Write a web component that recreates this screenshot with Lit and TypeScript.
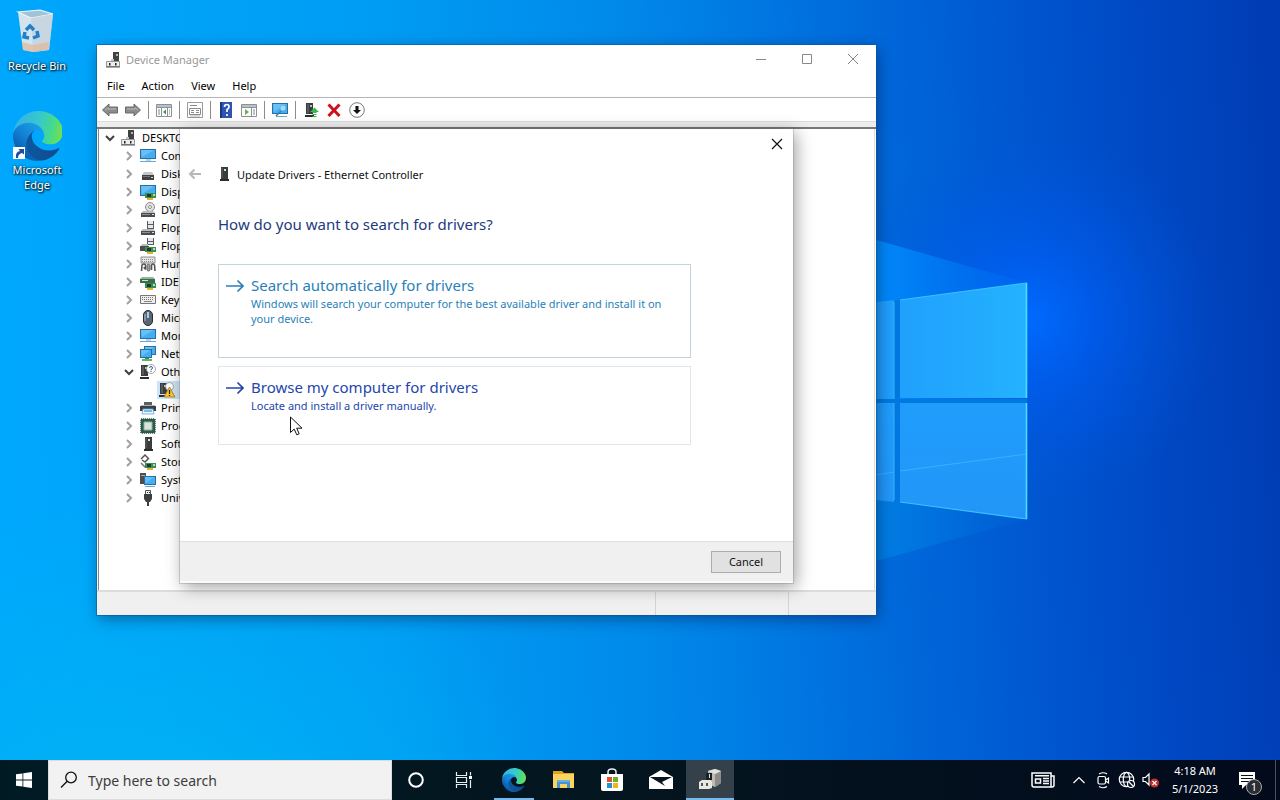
import { LitElement, html, svg, css, TemplateResult, SVGTemplateResult } from "lit";
import { customElement, property } from "lit/decorators.js";
import { classMap } from "lit/directives/class-map.js";

const tower = (x: number) => svg`
  <path d="M${x} 1h7v11h-7z" fill="#3a3d3e"/><path d="M${x + 1} 2h2v9h-2z" fill="#565a5b"/>
  <path d="M${x + 4} 3h2v2h-2z" fill="#9fd6a8"/><path d="M${x - 1} 13h9v2h-9z" fill="#2b2d2e"/>`;

const drive = svg`
  <path d="M3 9h10l2 2H1z" fill="#b9bcbe"/><path d="M1 11h14v4H1z" fill="#4a4d4f"/>
  <path d="M2 12h8v1H2z" fill="#8b9092"/><path d="M12 12h2v1h-2z" fill="#c7f0cb"/>`;

const card = svg`
  <path d="M5 9h11v5H5z" fill="#3b8f4e"/><path d="M7 10h4v3H7z" fill="#24343a"/>
  <path d="M7 14h6v2H7z" fill="#e0b52c"/><path d="M13 10h2v2h-2z" fill="#b7dcb0"/>`;

const screen = (x: number, y: number, w: number, h: number) => svg`
  <rect x=${x + 0.5} y=${y + 0.5} width=${w} height=${h} fill="#45aef0" stroke="#2a6fa3"/>
  <path d="M${x + 1} ${y + 1}h${w - 2}l-${w - 3} ${h - 2}z" fill="#7fcbfa" opacity=".6"/>`;

const chassis = svg`
  <path d="M8 0h6v9H8z" fill="#424242"/><path d="M11 2h2v2h-2z" fill="#b5b5b5"/>
  <path d="M6 7h3v3H6z" fill="#c4c4c4"/>
  <path d="M1.500 9.500h13v5h-13z" fill="#ededed" stroke="#8a8a8a" stroke-width=".9"/>
  <path d="M4 11h1.500v2.500H4zM10 11h1.500v2.500H10z" fill="#222"/><path d="M1 15h14" stroke="#555"/>`;

const edge = (id: string) => svg`
  <defs>
    <linearGradient id="${id}a" x1="63" y1="178" x2="241" y2="178" gradientUnits="userSpaceOnUse">
      <stop offset="0" stop-color="#0c59a4"/><stop offset="1" stop-color="#114a8b"/></linearGradient>
    <linearGradient id="${id}b" x1="157" y1="103" x2="46" y2="221" gradientUnits="userSpaceOnUse">
      <stop offset="0" stop-color="#1b9de2"/><stop offset=".5" stop-color="#1383d8"/><stop offset="1" stop-color="#0b5cab"/></linearGradient>
    <linearGradient id="${id}c" x1="20" y1="70" x2="255" y2="125" gradientUnits="userSpaceOnUse">
      <stop offset="0" stop-color="#35b4e4"/><stop offset=".45" stop-color="#36c8cf"/><stop offset=".75" stop-color="#43d98f"/><stop offset="1" stop-color="#72e04e"/></linearGradient>
  </defs>
  <g transform="translate(-4.63 -4.92)">
    <path fill="url(#${id}a)" d="M235.68 195.46a93.73 93.73 0 01-10.54 4.71 101.87 101.87 0 01-35.9 6.46c-47.32 0-88.54-32.55-88.54-74.32A31.48 31.48 0 01117.13 105c-42.8 1.8-53.8 46.4-53.8 72.53 0 73.88 68.09 81.37 82.76 81.37 7.91 0 19.84-2.3 27-4.56l1.31-.44a128.34 128.34 0 0066.6-52.8 4 4 0 00-5.32-5.64z"/>
    <path fill="url(#${id}b)" d="M110.34 246.34A79.2 79.2 0 0187.6 225a80.72 80.72 0 0129.53-120c3.12-1.47 8.45-4.13 15.54-4a32.35 32.35 0 0125.69 13 31.88 31.88 0 016.36 18.66c0-.21 24.46-79.6-80-79.6-43.9 0-80 41.66-80 78.21a130.15 130.15 0 0012.11 56 128 128 0 00156.38 67.11 75.55 75.55 0 01-62.78-8z"/>
    <path fill="url(#${id}c)" d="M156.94 153.78c-.81 1.05-3.3 2.5-3.3 5.66 0 2.61 1.7 5.12 4.72 7.23 14.38 10 41.49 8.68 41.56 8.68a59.56 59.56 0 0030.27-8.35 61.38 61.38 0 0030.43-52.88c.26-22.41-8-37.31-11.34-43.91C228.09 28.76 182.35 5 132.61 5a128 128 0 00-128 126.2c.48-36.54 36.8-66.05 80-66.05 3.5 0 23.46.34 42 10.07 16.34 8.58 24.9 18.94 30.85 29.21 6.18 10.67 7.28 24.15 7.28 29.52s-2.74 13.33-7.8 19.83z"/>
  </g>`;

const glyphs: Record<string, SVGTemplateResult> = {
  chassis,
  monitor: svg`${screen(0, 1, 15, 9)}<path d="M0 13h16v1H0z" fill="#6aa9d3"/><path d="M6 11h5v2H6z" fill="#b9d4e6"/>`,
  disk: svg`<path d="M4 6h8l2 3H2z" fill="#c4c6c8"/><path d="M2 9h12v5H2z" fill="#3f4244"/><path d="M3 10h7v1H3z" fill="#777"/><path d="M11 11h2v1h-2z" fill="#c7f0cb"/>`,
  display: svg`${screen(0, 1, 15, 10)}${card}`,
  dvd: svg`<circle cx="10" cy="5" r="4.5" fill="#e3e3e3" stroke="#8a8a8a"/><circle cx="10" cy="5" r="1.5" fill="#fff" stroke="#777" stroke-width=".8"/>${drive}`,
  floppy: svg`<path d="M7 1h7v8H7z" fill="#575b5e"/><path d="M8 1h5v3H8zM8 5h5v3H8z" fill="#e8e8e8"/>${drive}`,
  floppyCtl: svg`<path d="M7 0h7v7H7z" fill="#575b5e"/><path d="M8 0h5v3H8zM8 4h5v2H8z" fill="#e8e8e8"/><path d="M0 8h9v5H0z" fill="#4a4d4f"/><path d="M2 6h6v2H1z" fill="#bbb"/>${card}`,
  hid: svg`<path d="M1 1h14v6H1z" fill="#e6e6e6" stroke="#777" stroke-width=".8"/><path d="M2 3.500h12M2 5.500h12" stroke="#888" stroke-dasharray="1 1"/>
    <path d="M1.500 15l.5-6q1-1 2-1t1.500 1v4q-1 0-1.500-2" fill="none" stroke="#555" stroke-width="1.600"/><rect x="7" y="8" width="3" height="7" rx="1.500" fill="#9aa0a4" stroke="#555" stroke-width=".8"/><path d="M11.500 14V9q.5-1 1.500-1t1.500 1l.5 6" fill="none" stroke="#555" stroke-width="1.600"/>`,
  ide: svg`<path d="M2 3h11l2 2H0z" fill="#8fb89a"/><path d="M0 5h15v4H0z" fill="#3c6d4c"/><path d="M2 6h6v1H2z" fill="#d5e5d8"/>${card}`,
  keyboard: svg`<path d="M.5 3.500h15v8H.5z" fill="#eee" stroke="#777"/><path d="M2 5.500h12M2 7.500h12" stroke="#777" stroke-dasharray="1 1"/><path d="M4 9.500h8" stroke="#888"/>`,
  mouse: svg`<rect x="3.500" y=".5" width="9" height="15" rx="4.500" fill="#5a6672" stroke="#262c33"/><path d="M7 2h2v6H7z" fill="#9fd0f2"/><path d="M5 4v7" stroke="#bcc5cd"/>`,
  network: svg`${screen(4, 0, 11, 8)}${screen(0, 3, 11, 8)}<path d="M2 13h10v2H2z" fill="#58b96a"/><path d="M5 12h4v1H5z" fill="#3c8f4e"/>`,
  other: svg`${tower(1)}<circle cx="11" cy="5" r="4.500" fill="#fff" stroke="#8a9299" stroke-width=".8"/><path d="M9.500 4q0-1.500 1.500-1.500T12.500 4q0 1-1.500 1.500v.8M11 7v1" fill="none" stroke="#3d5b8c"/>`,
  warning: svg`${tower(1)}<circle cx="10.500" cy="4.500" r="4" fill="#fff" stroke="#8a9299" stroke-width=".8"/><path d="M10.500 5L16 15H5z" fill="#ffc62e" stroke="#a9761a" stroke-width=".8"/><path d="M10.500 8v4M10.500 13v1" stroke="#222" stroke-width="1.200"/>`,
  printer: svg`<path d="M4 2h8v4H4z" fill="#5a6068"/><path d="M0 6h16v5H0z" fill="#3b4147"/><path d="M1 5h14v1H1z" fill="#adb3b8"/><path d="M3 9h10l1 5H2z" fill="#eaf4fb" stroke="#6aa4cf" stroke-width=".8"/><path d="M4 11h8" stroke="#45aef0" stroke-width="1.500"/>`,
  cpu: svg`<path d="M1 1h14v14H1z" fill="#2f5a48" stroke="#2f5a48" stroke-width="1.500" stroke-dasharray="1.200 .8"/><path d="M4 4h8v8H4z" fill="#d8e4dc" stroke="#8fb3a0"/>`,
  tower: svg`<path d="M5 1h7v12H5z" fill="#3a3d3e"/><path d="M5 2h2v10H5z" fill="#4c4f51"/><path d="M8 3h2v2H8z" fill="#cfe8d2"/><path d="M4 13h9v2H4z" fill="#2b2d2e"/>`,
  storage: svg`<path d="M1 5l4-4 3 3M9 4L5 8 2 6" fill="none" stroke="#555" stroke-width="1.500"/><path d="M1 9l4 4h3" fill="none" stroke="#777" stroke-width="1.500"/>${card}`,
  system: svg`<path d="M0 1h6v11H0z" fill="#4a4e51"/><path d="M1 3h4v1H1z" fill="#aaa"/>${screen(4, 4, 11, 8)}<path d="M5 14h10v1H5z" fill="#6aa9d3"/>`,
  usb: svg`<path d="M5.500 .5h5v4h-5z" fill="#eee" stroke="#555"/><path d="M4 4h8v5l-2 3H6L4 9z" fill="#3d4042"/><path d="M8 12v4" stroke="#3d4042" stroke-width="2"/><path d="M7 2h1v1H7zM9 2h1v1H9z" fill="#333"/>`,
  back: svg`<path d="M.5 8L7 2v3h8.500v6H7v3z" fill="#8b8b8b" stroke="#6a6a6a"/><path d="M3 8l3-2v1h8" fill="none" stroke="#bbb"/>`,
  forward: svg`<path d="M15.500 8L9 2v3H.5v6H9v3z" fill="#8b8b8b" stroke="#6a6a6a"/><path d="M2 7h8V6l3 2" fill="none" stroke="#bbb"/>`,
  panel: svg`<path d="M.5 2.500h15v12H.5z" fill="#fff" stroke="#8a9298"/><path d="M1 3h14v2H1z" fill="#b9c2c9"/><path d="M1 5.500h14M5.500 6v8M11.500 6v8" stroke="#8a9298"/><path d="M10 7.500v5L7 10z" fill="#3f9b3a"/><path d="M2 8h2M2 10h2M2 12h2M13 8h1M13 10h1M13 12h1" stroke="#7d8890"/>`,
  panelRun: svg`<path d="M.5 2.500h15v12H.5z" fill="#fff" stroke="#8a9298"/><path d="M1 3h14v2H1z" fill="#b9c2c9"/><path d="M1 5.500h14M10.500 6v8" stroke="#8a9298"/><path d="M4 7v6l4-3z" fill="#6ab04a"/><path d="M12 8h2M12 10h2M12 12h2" stroke="#7d8890"/>`,
  properties: svg`<path d="M.5 .5h15v15H.5z" fill="#fff" stroke="#9a9a9a"/><path d="M3 3.500h7M2.500 6.500h11v6h-11zM4 8.500h3M9 8.500h3M4 10.500h3M9 10.500h3" fill="none" stroke="#8a8a8a"/><path d="M3 14h10" stroke="#b5b5b5"/>`,
  help: svg`<path d="M2 0h12v16H2z" fill="#2f55b4"/><path d="M2 0h2v16H2z" fill="#1c3681"/><path d="M6.500 5q0-2.500 2.300-2.500T11 5q0 1.500-2 2.500v2.500M9 12v2" fill="none" stroke="#fff" stroke-width="1.700"/>`,
  scan: svg`${screen(0, 1, 15, 10)}<circle cx="11" cy="6" r="3" fill="#9bdcff" stroke="#5fa8d8" stroke-width=".8"/><path d="M9 9l-5 5" stroke="#3d7ba7" stroke-width="1.500"/><path d="M4 14h11v1H4z" fill="#6aa9d3"/>`,
  update: svg`${tower(3)}<path d="M11.500 5.500L16 10h-2.500v1h-4v-1H7z" fill="#3fb54d"/><path d="M9.500 12h4v1h-4zM9.500 14h4v1h-4z" fill="#3fb54d"/>`,
  remove: svg`<path d="M2.500 2.500l11 11.500M13.500 2.500L2.500 14" stroke="#d0101c" stroke-width="3"/>`,
  down: svg`<circle cx="8" cy="8" r="7.300" fill="#fff" stroke="#777"/><path d="M6.500 4h3v4H12l-4 4-4-4h2.500z" fill="#111"/>`,
};

@customElement("sys-icon")
export class SysIcon extends LitElement {
  @property() name = "";
  static styles = css`
    :host { display: inline-flex; flex: none; }
    svg { width: 16px; height: 16px; display: block; overflow: visible; }
  `;
  render() {
    return html`<svg viewBox="0 0 16 16" aria-hidden="true">${glyphs[this.name]}</svg>`;
  }
}

interface Device { icon: string; label: string; open?: boolean; child?: string; }

const devices: Device[] = [
  { icon: "monitor", label: "Computer" },
  { icon: "disk", label: "Disks" },
  { icon: "display", label: "Display" },
  { icon: "dvd", label: "DVD" },
  { icon: "floppy", label: "Floppy" },
  { icon: "floppyCtl", label: "Floppy" },
  { icon: "hid", label: "Human" },
  { icon: "ide", label: "IDE" },
  { icon: "keyboard", label: "Keyboard" },
  { icon: "mouse", label: "Mice" },
  { icon: "monitor", label: "Monitor" },
  { icon: "network", label: "Network" },
  { icon: "other", label: "Other", open: true, child: "Ethernet Controller" },
  { icon: "printer", label: "Printer" },
  { icon: "cpu", label: "Processor" },
  { icon: "tower", label: "Software" },
  { icon: "storage", label: "Storage" },
  { icon: "system", label: "System" },
  { icon: "usb", label: "Universal" },
];

const tools: (string[])[] = [
  ["back:Back", "forward:Forward"],
  ["panel:Show/Hide Console Tree"],
  ["properties:Properties"],
  ["help:Help", "panelRun:Show/Hide Action Pane"],
  ["scan:Scan for hardware changes"],
  ["update:Update driver", "remove:Uninstall device", "down:Disable device"],
];

const chevron = (open: boolean) => html`<svg class="chev ${open ? "open" : ""}" viewBox="0 0 10 10" aria-hidden="true">
  <path d=${open ? "M1 3l4 4 4-4" : "M3 1l4 4-4 4"} /></svg>`;

@customElement("device-manager")
export class DeviceManager extends LitElement {
  static styles = css`
    :host { display: flex; flex-direction: column; background: #fff; color: #000; font-size: 11px; line-height: 18px; box-sizing: border-box;
      box-shadow: 0 0 0 1px rgba(20, 80, 130, 0.5), 2px 4px 14px rgba(0, 20, 60, 0.45); }
    button { font: inherit; color: inherit; background: none; border: 0; padding: 0; }
    .title { display: flex; align-items: center; height: 30px; padding-left: 8px; color: #999; }
    .title sys-icon { margin-right: 5px; }
    h1 { font: inherit; margin: 0; flex: 1; }
    .caption { display: grid; place-items: center; width: 46px; height: 30px; }
    .caption svg { width: 12px; height: 12px; fill: none; stroke: #888; }
    .menu { display: flex; gap: 17px; height: 22px; padding-left: 10px; align-items: center; border-bottom: 1px solid #b4b4b4; }
    .tools { display: flex; align-items: center; height: 23px; padding-left: 1px; }
    .tools button { display: grid; place-items: center; width: 23px; height: 23px; }
    .sep { width: 1px; height: 18px; margin: 0 3px 0 4px; background: #8c8c8c; }
    .band { height: 5px; background: #ededed; border-top: 1px solid #dcdcdc; border-bottom: 2px solid #777; }
    .tree { flex: 1; min-height: 0; border-left: 1px solid #888; border-right: 1px solid #ddd; margin: 0 1px; }
    ul { list-style: none; margin: 0; padding: 0; }
    .row { display: flex; align-items: center; height: 18px; white-space: nowrap; }
    .root { padding-left: 5px; }
    .leaf { padding-left: 24px; }
    .row button { display: grid; place-items: center; flex: none; width: 11px; height: 18px; }
    .row sys-icon { margin: 0 5px 0 6px; }
    .root > sys-icon { margin: 0 6px 0 5px; }
    .kid { width: 130px; margin-left: 58px; padding-left: 2px; background: #cce4f7; }
    .kid sys-icon { margin: 0 5px 0 0; }
    .chev { width: 10px; height: 10px; fill: none; stroke: #a0a0a0; stroke-width: 2; }
    .chev.open { stroke: #404040; }
    .status { display: flex; height: 23px; background: #f0f0f0; border-top: 2px solid #dcdcdc; padding-right: 6px; }
    .status i { width: 132px; border-left: 1px solid #d4d4d4; }
    .status i:first-child { flex: 1; border: 0; }
    .status i:last-child { width: 81px; }
  `;

  render() {
    return html`
      <header class="title">
        <sys-icon name="chassis"></sys-icon>
        <h1>Device Manager</h1>
        <button class="caption" aria-label="Minimize"><svg viewBox="0 0 12 12"><path d="M1 5.500h10" /></svg></button>
        <button class="caption" aria-label="Maximize"><svg viewBox="0 0 12 12"><path d="M1.500 .5h9v9h-9z" /></svg></button>
        <button class="caption" aria-label="Close"><svg viewBox="0 0 12 12"><path d="M1 0l10 10M11 0L1 10" /></svg></button>
      </header>
      <nav class="menu">${["File", "Action", "View", "Help"].map((m) => html`<button>${m}</button>`)}</nav>
      <div class="tools">
        ${tools.map((group, i) => html`
          ${i ? html`<span class="sep"></span>` : ""}
          ${group.map((t) => {
            const [name, label] = t.split(":");
            return html`<button aria-label=${label}><sys-icon name=${name}></sys-icon></button>`;
          })}`)}
      </div>
      <div class="band"></div>
      <div class="tree">
        <div class="row root"><button aria-label="Collapse">${chevron(true)}</button><sys-icon name="chassis"></sys-icon><span>DESKTOP</span></div>
        <ul>
          ${devices.map((d) => html`<li>
            <div class="row leaf">
              <button aria-label="Toggle ${d.label}">${chevron(!!d.open)}</button>
              <sys-icon name=${d.icon}></sys-icon><span>${d.label}</span>
            </div>
            ${d.child ? html`<div class="row kid" aria-label=${d.child}><sys-icon name="warning"></sys-icon></div>` : ""}
          </li>`)}
        </ul>
      </div>
      <footer class="status"><i></i><i></i><i></i></footer>
    `;
  }
}

const options = [
  { title: "Search automatically for drivers", text: "Windows will search your computer for the best available driver and install it on your device.", hot: false },
  { title: "Browse my computer for drivers", text: "Locate and install a driver manually.", hot: true },
];

@customElement("update-dialog")
export class UpdateDialog extends LitElement {
  static styles = css`
    :host { display: flex; flex-direction: column; background: #fff; font-size: 11px; box-sizing: border-box; color: #111;
      box-shadow: 0 0 0 1px rgba(120, 120, 120, 0.3), 3px 4px 16px rgba(0, 0, 0, 0.38); }
    button { font: inherit; color: inherit; background: none; border: 0; padding: 0; cursor: default; }
    .close { align-self: flex-end; display: grid; place-items: center; width: 32px; height: 30px; }
    .close svg { width: 12px; height: 12px; stroke: #111; stroke-width: 1.2; }
    .head { display: flex; align-items: center; height: 30px; padding-left: 8px; }
    .head button { display: flex; width: 28px; }
    .head button svg { width: 14px; height: 12px; fill: none; stroke: #b8b8b8; stroke-width: 2; }
    .head sys-icon { margin-right: 5px; }
    h2 { font: inherit; margin: 0; }
    .body { flex: 1; min-height: 0; padding: 23px 102px 0 38px; }
    h3 { margin: 0 0 28px; font-size: 15px; line-height: 24px; font-weight: 400; color: #1c3a80; }
    .options { display: flex; flex-direction: column; gap: 8px; }
    .opt { display: grid; grid-template-columns: 18px 1fr; column-gap: 7px; row-gap: 1px; align-content: start; text-align: left; padding: 10px 18px 31px 7px;
      border: 1px solid #c3d3de; color: #2a7fb8; }
    .opt.hot { border-color: #e0e6ea; color: #2446ac; }
    .opt svg { width: 18px; height: 20px; fill: none; stroke: currentColor; stroke-width: 1.7; }
    .opt b { font-size: 15px; line-height: 20px; font-weight: 400; }
    .opt span { grid-column: 2; line-height: 15px; }
    .foot { display: flex; justify-content: flex-end; align-items: center; height: 39px; padding-right: 12px; background: #f0f0f0; border-top: 1px solid #dfdfdf; border-bottom: 2px solid #fafafa; }
    .cancel { width: 70px; height: 22px; border: 1px solid #adadad; background: #e1e1e1; }
  `;

  render() {
    return html`
      <button class="close" aria-label="Close"><svg viewBox="0 0 12 12"><path d="M1 1l10 10M11 1L1 11" /></svg></button>
      <div class="head">
        <button aria-label="Back"><svg viewBox="0 0 14 12"><path d="M13 6H2M6.500 1.500L2 6l4.500 4.500" /></svg></button>
        <sys-icon name="tower"></sys-icon>
        <h2>Update Drivers - Ethernet Controller</h2>
      </div>
      <div class="body">
        <h3>How do you want to search for drivers?</h3>
        <div class="options">
          ${options.map((o) => html`<button class=${classMap({ opt: true, hot: o.hot })}>
            <svg viewBox="0 0 18 20" aria-hidden="true"><path d="M0 11h17M11.500 5.500L17 11l-5.500 5.500" /></svg>
            <b>${o.title}</b><span>${o.text}</span>
          </button>`)}
        </div>
      </div>
      <div class="foot"><button class="cancel">Cancel</button></div>
    `;
  }
}

const apps: { label: string; state?: string; art: TemplateResult }[] = [
  { label: "Cortana", art: html`<svg class="i24" viewBox="0 0 24 24"><circle cx="12" cy="12" r="6.800" fill="none" stroke="#fff" stroke-width="2" /></svg>` },
  { label: "Task View", art: html`<svg class="i24" viewBox="0 0 24 24" fill="none" stroke="#e8eef0" stroke-width="1.200"><path d="M3.500 4v3.500h10V4M3.500 20v-3.500h10V20M3.500 9.500h10v5h-10zM17.500 4v3.500M17.500 12v8"/><path d="M16 8h3v3h-3z" fill="#fff" stroke="none"/></svg>` },
  { label: "Microsoft Edge", state: "running", art: html`<svg class="i24" viewBox="0 0 256 256">${edge("t")}</svg>` },
  { label: "File Explorer", art: html`<svg class="i24" viewBox="0 0 24 24"><path d="M2 3h9l2 2h10v5H2z" fill="#e0a020"/><path d="M2 6h21v14H2z" fill="#fcd35f"/><path d="M6 12h13v8h-3v-4H9v4H6z" fill="#4295d1"/><path d="M6 12h13v2H6z" fill="#64b1e4"/></svg>` },
  { label: "Microsoft Store", art: html`<svg class="i24" viewBox="0 0 24 24"><path d="M8 7V4q0-3 4-3t4 3v3" fill="none" stroke="#eee" stroke-width="1.500"/><path d="M1 6h22v15q0 2-2 2H3q-2 0-2-2z" fill="#fff"/><path d="M7 9h5v5H7z" fill="#e0532f"/><path d="M13 9h5v5h-5z" fill="#6fae2c"/><path d="M7 15h5v5H7z" fill="#1f93d8"/><path d="M13 15h5v5h-5z" fill="#f0b31c"/></svg>` },
  { label: "Mail", art: html`<svg class="i24" viewBox="0 0 24 24"><path d="M0 9l12-7 12 7v12H0z" fill="#fff"/><path d="M1 9h22l-10 5 3 4-15-9z" fill="#06141c"/></svg>` },
  { label: "Device Manager", state: "running active", art: html`<svg class="i24" viewBox="0 0 24 24"><path d="M10 3l7-2 6 2v12l-6 4-7-3z" fill="#bdbcb5"/><path d="M17 6l6-3v12l-6 4z" fill="#8d8c86"/><path d="M10 3l7-2 6 2-6 3z" fill="#e2e1db"/><path d="M8 5h6v7H8z" fill="#1c2125"/><path d="M11 6h1v4h-1z" fill="#ddd"/><path d="M1 14l3-2h8l2 2v6l-3 1H1z" fill="#e9e8e3"/><path d="M3 15h2v3H3zM8 15h2v3H8z" fill="#555"/></svg>` },
];

@customElement("task-bar")
export class TaskBar extends LitElement {
  static styles = css`
    :host { display: flex; height: 40px; background: linear-gradient(90deg, #001a24, #04151f 50%, #020a1c); color: #fff; font-size: 11px; }
    button { font: inherit; color: inherit; background: none; border: 0; padding: 0; display: grid; place-items: center; position: relative; }
    .start { width: 48px; }
    .start svg { width: 16px; height: 16px; fill: #fff; }
    .search { display: flex; align-items: center; width: 344px; background: #f2f2f2; border: 1px solid #dcdcdc; box-sizing: border-box; padding-left: 11px; gap: 10px; }
    .search svg { width: 18px; height: 18px; fill: none; stroke: #111; stroke-width: 1.3; flex: none; }
    .search input { font: inherit; font-size: 14px; border: 0; background: none; flex: 1; min-width: 0; padding: 0; outline: 0; }
    .search input::placeholder { color: #3c3c3c; opacity: 1; }
    .apps { display: flex; gap: 1px; flex: 1; }
    .apps button { width: 48px; }
    .i24 { width: 24px; height: 24px; }
    .running::after { content: ""; position: absolute; left: 4px; right: 4px; bottom: 0; height: 2px; background: #76b9ed; }
    .active { background: #34414b; }
    .active::after { left: 0; right: 0; }
    .tray { display: flex; }
    .tray button { width: 24px; }
    .tray svg { width: 18px; height: 18px; fill: none; stroke: #fff; stroke-width: 1.2; }
    .tray .news { width: 36px; margin-right: 6px; }
    .tray .news svg { width: 24px; }
    .tray .clock { width: 64px; line-height: 18px; align-content: center; text-align: center; }
    .tray .notes { width: 48px; margin-left: -4px; }
    .tray .notes svg { width: 24px; height: 24px; }
    .badge { position: absolute; left: 23px; top: 19px; width: 14px; height: 14px; border-radius: 50%; background: #2a2d33; border: 1px solid #aaa; line-height: 14px; font-size: 11px; }
    .peek { width: 4px; border-left: 1px solid #4a5260; margin-left: 4px; }
  `;

  render() {
    return html`
      <button class="start" aria-label="Start"><svg viewBox="0 0 16 16"><path d="M0 2.300l6.500-.9v6.200H0zM7.300 1.300L16 0v7.600H7.300zM0 8.400h6.500v6.200L0 13.700zM7.300 8.400H16V16l-8.700-1.200z" /></svg></button>
      <label class="search">
        <svg viewBox="0 0 18 18"><circle cx="11" cy="6.500" r="5.300" /><path d="M7.200 10.300L1 16.500" /></svg>
        <input type="text" aria-label="Search" placeholder="Type here to search" />
      </label>
      <nav class="apps">${apps.map((a) => html`<button class=${a.state ?? ""} aria-label=${a.label}>${a.art}</button>`)}</nav>
      <div class="tray">
        <button class="news" aria-label="News and interests"><svg viewBox="0 0 24 18"><path d="M1 2h19v14H3q-2 0-2-2zM20 5h3v9q0 2-2 2h-2" stroke-width="1.500"/><path d="M4.500 8h5v4h-5zM12 7.500h6M12 10h6M12 12.500h6M4 4.800h14" stroke-width="1.500"/></svg></button>
        <button aria-label="Show hidden icons"><svg viewBox="0 0 18 18"><path d="M3.500 12L9 6.500l5.500 5.500" /></svg></button>
        <button aria-label="Meet Now"><svg viewBox="0 0 18 18"><rect x="4" y="5.500" width="7.500" height="7.500" rx="1.500"/><path d="M11.500 9l3-2v5l-3-2M5 3q4.500-2.500 8 0M5 15.500q4.500 2.500 8 0"/></svg></button>
        <button aria-label="Network"><svg viewBox="0 0 18 18"><circle cx="8.500" cy="8.500" r="7.200"/><ellipse cx="8.500" cy="8.500" rx="3.200" ry="7.200"/><path d="M2 6h13M2 11h8"/><circle cx="13" cy="13" r="3.500" fill="#05101d"/><path d="M10.500 10.500l5 5"/></svg></button>
        <button aria-label="Volume muted"><svg viewBox="0 0 18 18"><path d="M1 6.500h2.500L7 3v11l-3.500-3.500H1z"/><circle cx="12.500" cy="12" r="4.500" fill="#c42b2b" stroke="none"/><path d="M10.500 10l4 4M14.500 10l-4 4"/></svg></button>
        <button class="clock"><span>4:18 AM<br />5/1/2023</span></button>
        <button class="notes" aria-label="Notifications"><svg viewBox="0 0 24 24"><path d="M4 4h16v13h-9l-4 4v-4H4z" fill="#fff" stroke="none"/><path d="M6 7.500h12M6 10.500h12M6 13.500h8" stroke="#05101d"/></svg><span class="badge">1</span></button>
        <div class="peek"></div>
      </div>
    `;
  }
}

@customElement("app-root")
export class AppRoot extends LitElement {
  static styles = css`
    :host { display: grid; grid-template-rows: 1fr auto; height: 100vh; overflow: hidden; position: relative; background: #0078d7;
      font-family: "Noto Sans", "Open Sans", sans-serif; font-size: 11px; }
    .wall { position: absolute; inset: 0; width: 100%; height: 100%; }
    .desktop { position: relative; }
    .shortcuts { display: flex; flex-direction: column; gap: 38px; width: 74px; padding-top: 7px; }
    .shortcuts a { display: flex; flex-direction: column; align-items: center; text-align: center; color: #fff; text-decoration: none; line-height: 15px;
      text-shadow: 1px 1px 2px #000, 0 0 3px rgba(0, 0, 0, 0.8); }
    .shortcuts svg { width: 50px; height: 50px; margin-bottom: 1px; }
    device-manager { position: absolute; inset: 45px 404px 145px 97px; }
    update-dialog { position: absolute; inset: 129px 487px 177px 180px; }
    .pointer { position: absolute; left: 290px; top: 416px; width: 13px; height: 20px; }
    task-bar { position: relative; }
  `;

  render() {
    return html`
      <svg class="wall" viewBox="0 0 1280 800" preserveAspectRatio="none" aria-hidden="true">
        <defs>
          <linearGradient id="base" x1="0" y1="460" x2="1280" y2="400" gradientUnits="userSpaceOnUse">
            <stop offset="0" stop-color="#00a8fd"/><stop offset=".3" stop-color="#009df4"/><stop offset=".5" stop-color="#0089e9"/>
            <stop offset=".7" stop-color="#0068da"/><stop offset=".86" stop-color="#004eca"/><stop offset="1" stop-color="#003db4"/></linearGradient>
          <radialGradient id="cyan" cx="150" cy="900" r="420" gradientUnits="userSpaceOnUse">
            <stop offset="0" stop-color="#00b8f0"/><stop offset="1" stop-color="#00b0f4" stop-opacity="0"/></radialGradient>
          <radialGradient id="glow" cx="1030" cy="320" r="190" gradientUnits="userSpaceOnUse">
            <stop offset="0" stop-color="#006aff"/><stop offset=".35" stop-color="#005ef2" stop-opacity=".7"/><stop offset="1" stop-color="#0054dc" stop-opacity="0"/></radialGradient>
          <linearGradient id="pane" x1="876" y1="0" x2="1027" y2="0" gradientUnits="userSpaceOnUse">
            <stop offset="0" stop-color="#1f9dfc"/><stop offset="1" stop-color="#24b2ff"/></linearGradient>
          <linearGradient id="pane2" x1="0" y1="400" x2="0" y2="520" gradientUnits="userSpaceOnUse">
            <stop offset="0" stop-color="#1f9dfc"/><stop offset="1" stop-color="#2296f8"/></linearGradient>
          <linearGradient id="beam" x1="870" y1="0" x2="1030" y2="0" gradientUnits="userSpaceOnUse">
            <stop offset="0" stop-color="#008cfc"/><stop offset="1" stop-color="#007af8" stop-opacity=".1"/></linearGradient>
          <linearGradient id="beam2" x1="870" y1="0" x2="1030" y2="0" gradientUnits="userSpaceOnUse">
            <stop offset="0" stop-color="#0080e4"/><stop offset="1" stop-color="#006cdc" stop-opacity=".1"/></linearGradient>
        </defs>
        <path d="M0 0h1280v800H0z" fill="url(#base)"/>
        <path d="M0 400h700v400H0z" fill="url(#cyan)"/>
        <path d="M700 0h580v800H700z" fill="url(#glow)"/>
        <path d="M700 190L880 241l147 42v117H700z" fill="url(#beam)"/>
        <path d="M700 400h327v119L880 560l-180 50z" fill="url(#beam2)"/>
        <path d="M876 302l18-2v99h-18zM900 300l127-17v115H900z" fill="url(#pane)"/>
        <path d="M876 403h18v99l-18-2zM900 403h127v116l-127-17z" fill="url(#pane2)"/>
        <path d="M894 300v99h6v-99zM876 399h151v4H876zM894 403v99h6v-99z" fill="#0078e0"/>
        <path d="M900 471l127-17M876 475l18-3" stroke="#35b2ff"/>
        <path d="M894 302v97M894 403v97" stroke="#36b6ff" fill="none"/>
        <path d="M900 300l127-17M1027 519l-127-17" stroke="#38c0ff" stroke-width="1.200" fill="none"/>
        <path d="M1026.500 283v115M1026.500 403v116" stroke="#4cdcff" stroke-width="1.600"/>
      </svg>
      <main class="desktop">
        <nav class="shortcuts">
          <a href="#recycle"><svg viewBox="0 0 50 50">
            <g transform="translate(3 0)"><path d="M3 5l22-2 13 4-4 36-16 2-10-2z" fill="#dfe7ec" opacity=".95"/>
            <path d="M3 5l22-2 13 4-22 4z" fill="#9fc3d8" stroke="#f2f6f8" stroke-width="1.200"/>
            <path d="M16 11l22-4-4 36-16 2z" fill="#c2d0da" opacity=".7"/><path d="M7 35l11 3 16-3-.6 8-15.400 2-10-2z" fill="#dfb997" opacity=".7"/>
            <g fill="none" stroke="#2080cc" stroke-width="3.500"><path d="M11 23l4-4 4 4M22 24l1 5-5 2M14 31l-5-1 1-5"/></g></g>
          </svg>Recycle Bin</a>
          <a href="#edge"><svg viewBox="0 0 50 50"><svg x="1" y="0" width="49" height="49" viewBox="0 0 256 256">${edge("d")}</svg>
            <path d="M1 36h12v12H1z" fill="#fff"/><path d="M4 47q-1-6 4-7l-1.500-2H12v5.500L10 42q-4 1-4 5z" fill="#1d4f9a"/></svg>Microsoft<br />Edge</a>
        </nav>
        <device-manager></device-manager>
        <update-dialog role="dialog" aria-label="Update Drivers"></update-dialog>
        <svg class="pointer" viewBox="0 0 13 20" aria-hidden="true"><path d="M.5 1v15.500l3.700-3.400 2.600 5.700 2.400-1-2.500-5.600h5.300z" fill="#fff" stroke="#111"/></svg>
      </main>
      <task-bar></task-bar>
    `;
  }
}
